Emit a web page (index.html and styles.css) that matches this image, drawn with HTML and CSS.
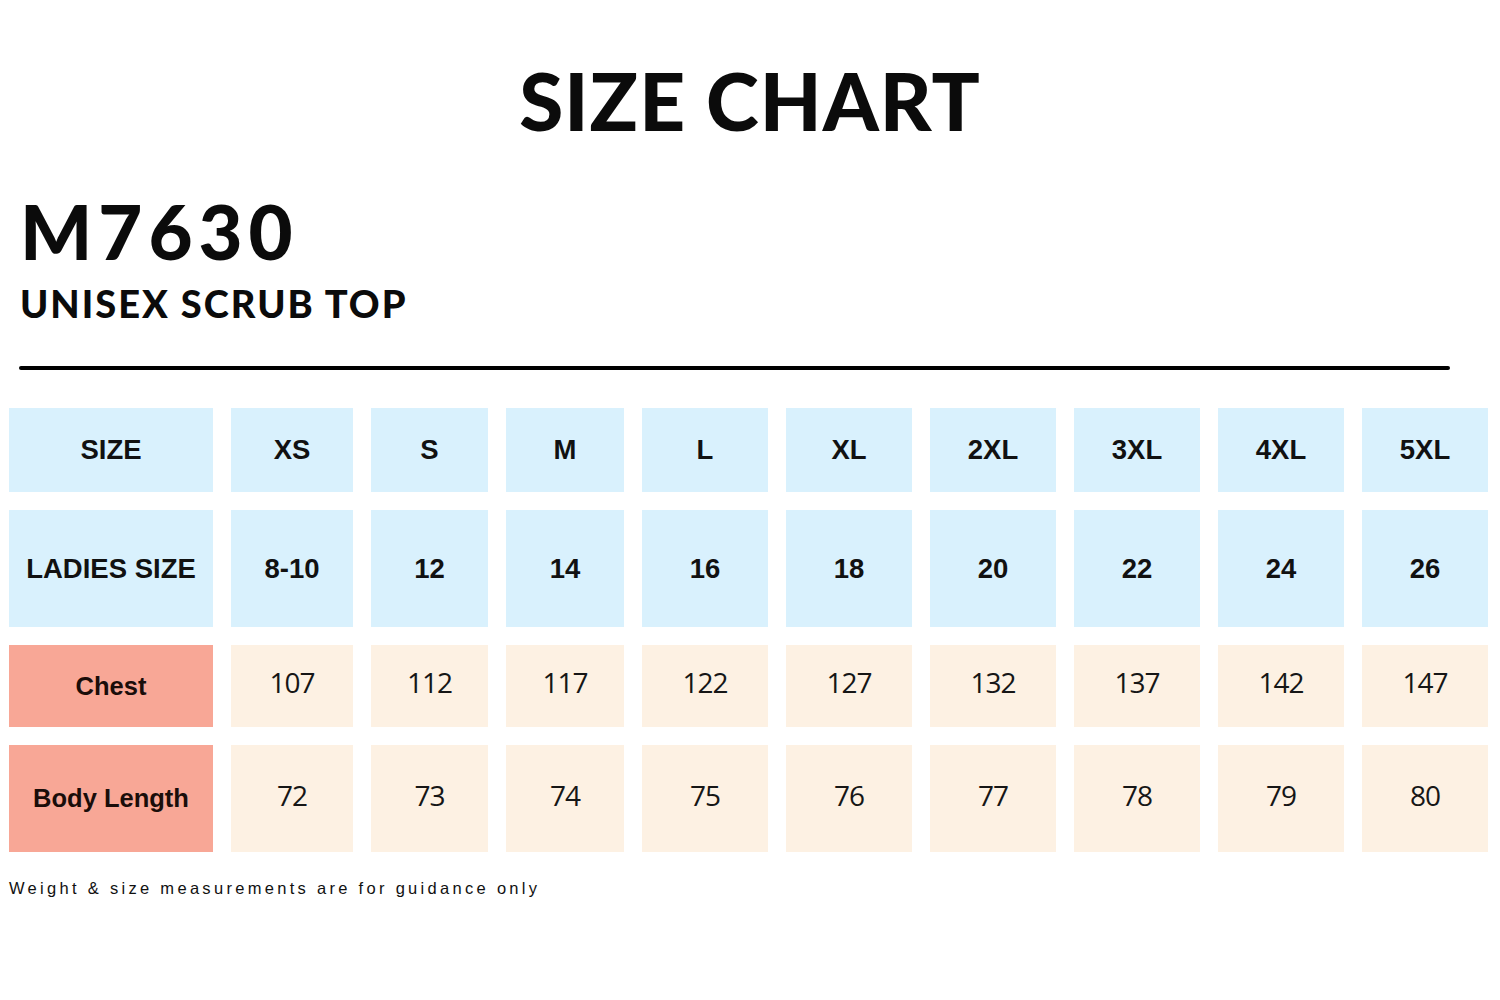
FILE: index.html
```html
<!DOCTYPE html>
<html>
<head>
<meta charset="utf-8">
<link rel="stylesheet" href="styles.css">
</head>
<body>
<div class="page">
  <h1 class="title">SIZE CHART</h1>
  <div class="product">
    <div class="code">M7630</div>
    <div class="name">UNISEX SCRUB TOP</div>
  </div>
  <div class="rule"></div>
  <div class="chart">
    <div class="cell head label">SIZE</div>
    <div class="cell head">XS</div>
    <div class="cell head">S</div>
    <div class="cell head">M</div>
    <div class="cell head">L</div>
    <div class="cell head">XL</div>
    <div class="cell head">2XL</div>
    <div class="cell head">3XL</div>
    <div class="cell head">4XL</div>
    <div class="cell head">5XL</div>

    <div class="cell head label">LADIES SIZE</div>
    <div class="cell head">8-10</div>
    <div class="cell head">12</div>
    <div class="cell head">14</div>
    <div class="cell head">16</div>
    <div class="cell head">18</div>
    <div class="cell head">20</div>
    <div class="cell head">22</div>
    <div class="cell head">24</div>
    <div class="cell head">26</div>

    <div class="cell meas label">Chest</div>
    <div class="cell val">107</div>
    <div class="cell val">112</div>
    <div class="cell val">117</div>
    <div class="cell val">122</div>
    <div class="cell val">127</div>
    <div class="cell val">132</div>
    <div class="cell val">137</div>
    <div class="cell val">142</div>
    <div class="cell val">147</div>

    <div class="cell meas label">Body Length</div>
    <div class="cell val">72</div>
    <div class="cell val">73</div>
    <div class="cell val">74</div>
    <div class="cell val">75</div>
    <div class="cell val">76</div>
    <div class="cell val">77</div>
    <div class="cell val">78</div>
    <div class="cell val">79</div>
    <div class="cell val">80</div>
  </div>
  <p class="note">Weight &amp; size measurements are for guidance only</p>
</div>
</body>
</html>
```

FILE: styles.css
```css
* { box-sizing: border-box; }
html, body { margin: 0; padding: 0; background: #ffffff; }
.page {
  width: 1500px;
  height: 1000px;
  color: #0b0b0b;
  font-family: "Lato", "Liberation Sans", sans-serif;
}
.title {
  margin: 0;
  padding-top: 60px;
  height: 150px;
  text-align: center;
  font-size: 80px;
  line-height: 80px;
  font-weight: 900;
  letter-spacing: 1px;
}
.product {
  padding-left: 20px;
  padding-top: 43px;
}
.code {
  font-size: 76px;
  line-height: 76px;
  font-weight: 900;
  letter-spacing: 6px;
}
.name {
  margin-top: 14px;
  font-size: 38px;
  line-height: 40px;
  font-weight: 900;
  letter-spacing: 2px;
}
.rule {
  margin: 43px 0 0 19px;
  width: 1431px;
  height: 4px;
  border-radius: 2px;
  background: #000;
}
.chart {
  margin: 38px 0 0 9px;
  display: grid;
  grid-template-columns: 204px 122px 117px 118px 126px 126px 126px 126px 126px 126px;
  grid-template-rows: 84px 117px 82px 107px;
  column-gap: 18px;
  row-gap: 18px;
}
.cell {
  display: flex;
  align-items: center;
  justify-content: center;
  font-family: "Liberation Sans", Arial, sans-serif;
}
.head {
  background: #d9f1fd;
  font-weight: 700;
  font-size: 27.5px;
  color: #111;
}
.meas {
  background: #f8a796;
  font-weight: 700;
  font-size: 25.5px;
  color: #1a0d0a;
}
.val {
  background: #fdf1e3;
  font-family: "Open Sans", "Noto Sans", sans-serif;
  font-weight: 400;
  font-size: 28px;
  letter-spacing: -1px;
  color: #161616;
  padding-bottom: 8px;
}
.note {
  margin: 27px 0 0 9px;
  font-family: "Liberation Sans", Arial, sans-serif;
  font-size: 16.5px;
  letter-spacing: 3.3px;
  color: #111;
}
```
